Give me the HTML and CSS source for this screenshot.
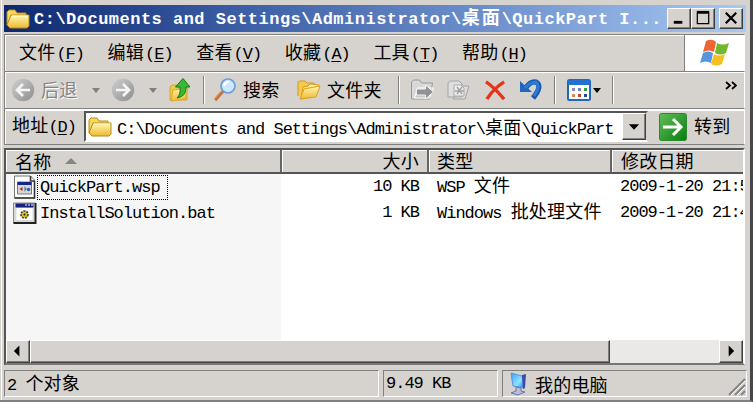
FILE: index.html
```html
<!DOCTYPE html>
<html lang="zh-CN"><head><meta charset="utf-8"><title>QuickPart</title><link rel="stylesheet" href="styles.css"></head>
<body>
<svg width="0" height="0" class="defs"><defs>
<linearGradient id="gold" x2="0" y2="1"><stop stop-color="#fff7ae"/><stop offset="1" stop-color="#efb936"/></linearGradient>
<linearGradient id="grey" x2="1" y2="1"><stop stop-color="#d0d0d0"/><stop offset="1" stop-color="#8d8d8d"/></linearGradient>
<linearGradient id="green" x2="1" y2="1"><stop stop-color="#62bd5a"/><stop offset="1" stop-color="#07800d"/></linearGradient>
<linearGradient id="screen" x2="1" y2="1"><stop stop-color="#3f9bff"/><stop offset=".6" stop-color="#8be4ff"/><stop offset="1" stop-color="#2c78dc"/></linearGradient>
<symbol id="folder" viewBox="0 0 24 20"><path d="M1 16V3l2-2h6l2 3h9v4" fill="#f6d662" stroke="#b98d19"/><path d="M5 6h18v11l-2 2H4l-3-3z" fill="url(#gold)" stroke="#ba8814"/><path d="M6 7h16" stroke="#fffbd0"/></symbol>
</defs></svg>
<div class="window">
<div class="title"><svg class="tfolder"><use href="#folder"/></svg><div class="tt">C:\Documents and Settings\Administrator\<span class="cj">桌面</span>\QuickPart I...</div>
<div class="buttons"><i class="btn"><svg viewBox="0 0 23 20"><path d="M6 14h9" stroke="#000" stroke-width="3"/></svg></i><i class="btn"><svg viewBox="0 0 23 20"><path d="M5 3.5h13" stroke="#000" stroke-width="3"/><path d="M5.5 4v11.5h12V4" fill="none" stroke="#000" stroke-width="1.3"/></svg></i><i class="btn close"><svg viewBox="0 0 23 20"><path d="m6 4 11 11M17 4 6 15" stroke="#000" stroke-width="2.3"/></svg></i></div></div>
<div class="menu"><div class="items"><span><b class="cj">文件</b>(<u>F</u>)</span><span><b class="cj">编辑</b>(<u>E</u>)</span><span><b class="cj">查看</b>(<u>V</u>)</span><span><b class="cj">收藏</b>(<u>A</u>)</span><span><b class="cj">工具</b>(<u>T</u>)</span><span><b class="cj">帮助</b>(<u>H</u>)</span></div>
<div class="flag"><svg width="32" height="30" viewBox="0 0 32 30"><path d="M7 3q6-3 10 1l-2 10q-5-3-11 0z" fill="#ee6534"/><path d="M18 5q5 3 12 0l-3 10q-6 3-11 0z" fill="#72b72d"/><path d="M4 15q5-3 10 0l-2 10q-5-3-11 0z" fill="#5596df"/><path d="M15 16q5 3 11 0l-3 10q-6 3-11 0z" fill="#f4bf1f"/></svg></div></div>
<div class="tools">
<svg class="g24 back" viewBox="0 0 24 24"><circle cx="12" cy="12" r="11.2" fill="url(#grey)"/><path d="M19 12H6m6-6-6 6 6 6" fill="none" stroke="#f5f5f5" stroke-width="2.7"/></svg>
<span class="cj off">后退</span><i class="down off1"></i>
<svg class="g24 fwd" viewBox="0 0 24 24"><circle cx="12" cy="12" r="11.2" fill="url(#grey)"/><path d="M5 12h13m-6-6 6 6-6 6" fill="none" stroke="#f5f5f5" stroke-width="2.7"/></svg><i class="down off2"></i>
<svg class="up" viewBox="0 0 22 24"><path d="M1 22V9l2-2h5l1 3h9v12z" fill="#edca4d" stroke="#d5a72c"/><path d="m4 12 15-2-3 11-14 2z" fill="url(#gold)" stroke="#dba928"/><path d="M8 20q4-4 3-11H6.500L14 .5 21 9h-4q1 9-9 11z" fill="#36b936" stroke="#14791b"/></svg>
<i class="sep s1"></i>
<svg class="search" viewBox="0 0 24 24"><path d="m2 22 8-9" stroke="#c97540" stroke-width="3.4"/><path d="m1 21 8-9" stroke="#efb178"/><circle cx="15" cy="8" r="7" fill="#cceaff" stroke="#6e9bdb" stroke-width="1.7"/><path d="M11 8q1-4 5-4" stroke="#fff" stroke-width="2" fill="none"/></svg>
<span class="cj">搜索</span>
<svg class="folders" viewBox="0 0 24 20"><path d="M1 16V2l2-1h5l2 2h7v12" fill="#f3ca50" stroke="#d39b21"/><path d="m4 19 2-12 5-1 2-2 9 1-3 11z" fill="url(#gold)" stroke="#d99a1c"/><path d="m3 19 4-10 16-3-4 11z" fill="url(#gold)" stroke="#dea023"/></svg>
<span class="cj l3">文件夹</span><i class="sep s2"></i>
<svg class="mv" viewBox="0 0 24 22"><path d="M1 20V3l2-2h6l2 3h11l-3 16z" fill="#d9d9d9" stroke="#999"/><path d="m4 19 3-10h16l-4 10z" fill="#c7c7c7" stroke="#fff"/><path d="M6 10h9V6l8 7-8 7v-4H6z" fill="#929292" stroke="#f2f2f2"/></svg>
<svg class="cp" viewBox="0 0 24 22"><path d="M1 16V4l2-2h9l3 3v13H1zM15 7h7l-4 13H6z" fill="#dedede" stroke="#a3a3a3"/><path d="M7 6h7l3 3v8H7z" fill="#eee" stroke="#aaa"/><path d="m10 8 5 7m0-7-5 7m-2-3h9" stroke="#a1a1a1" stroke-width="1.4"/></svg>
<svg class="del" viewBox="0 0 24 22"><path d="M2 2q8 5 19 18M21 2Q10 9 3 20" fill="none" stroke="#e5351a" stroke-width="3.5"/></svg>
<svg class="undo" viewBox="0 0 24 22"><path d="M6 10q5-8 11-7 7 4-3 16" fill="none" stroke="#1857ac" stroke-width="5.2"/><path d="M1 2v11h12z" fill="#2166bd"/><path d="M6 9q5-6 11-6 5 4-2 14" fill="none" stroke="#2d7bd5" stroke-width="3"/></svg>
<i class="sep s3"></i>
<svg class="view" viewBox="0 0 24 22"><rect x="1" y="1" width="22" height="20" rx="1.5" fill="#fff" stroke="#2367bd" stroke-width="2"/><path d="M1 3.5h22" stroke="#2470cc" stroke-width="5"/><path d="M5 10.5h3" stroke="#8586cb" stroke-width="3"/><path d="M11 10.5h3" stroke="#6b7eca" stroke-width="3"/><path d="M17 10.5h3" stroke="#31a345" stroke-width="3"/><path d="M11 16.5h3" stroke="#bd4828" stroke-width="3"/><path d="M17 16.5h3" stroke="#244795" stroke-width="3"/><path d="M5 16.5h3" stroke="#dc8a60" stroke-width="3"/></svg><i class="down black"></i><i class="sep s4"></i>
<svg class="more" viewBox="0 0 12 9"><path d="m1 1 4 3.5L1 8m6-7 4 3.5L7 8" fill="none" stroke="#000" stroke-width="1.8"/></svg>
</div>
<div class="address"><div class="alabel"><span class="cj">地址</span>(<u>D</u>)</div><div class="combo"><svg class="afolder"><use href="#folder"/></svg><div class="path">C:\Documents and Settings\Administrator\<span class="cj">桌面</span>\QuickPart</div><i class="btn drop"><svg viewBox="0 0 21 27"><path d="M5 11h11l-5.500 6z"/></svg></i></div>
<svg class="go" viewBox="0 0 28 28"><rect x=".5" y=".5" width="27" height="27" rx="2" fill="url(#green)" stroke="#2b8930"/><path d="M4 14h18M14 6l8 8-8 8" fill="none" stroke="#fff" stroke-width="3"/></svg><span class="cj">转到</span></div>
<div class="list"><div class="head"><div class="c1"><span class="cj">名称</span><i class="sort"></i></div><div class="c2 cj">大小</div><div class="c3 cj">类型</div><div class="c4 cj">修改日期</div></div>
<div class="body">
<div class="row"><div class="name"><svg viewBox="0 0 24 24"><path d="M2 1h16l4 4v18H2z" fill="#fff" stroke="#777"/><path d="M2 23h20V6M18 1v5h4" fill="none" stroke="#333" stroke-width="1.6"/><path d="M5 7h14v12H5z" fill="#d8d8d8" stroke="#777"/><path d="M5 8.500h14" stroke="#172489" stroke-width="3"/><path d="m10 12-3 2 3 2z" fill="#c21e18"/><path d="m12 11 2 3-2 3z" fill="#1b8a92"/><circle cx="16" cy="14.500" r="1.800" fill="#3360bb"/></svg><span class="focus">QuickPart.wsp</span></div><div class="size">10 KB</div><div class="type">WSP <span class="cj">文件</span></div><div class="date">2009-1-20 21:53</div></div>
<div class="row"><div class="name"><svg viewBox="0 0 24 24"><path d="M1 2h22v20H1z" fill="#d8d8d8" stroke="#8a8a8a"/><path d="M1 22h22V2" fill="none" stroke="#222" stroke-width="2"/><path d="M3 4.500h18" stroke="#17217f" stroke-width="4"/><path d="M13 4h1m2 0h1m2 0h1" stroke="#fff" stroke-width="2"/><path d="M4 7h16v12H4z" fill="#fff"/><circle cx="12" cy="13.500" r="3.500" fill="#d8c42c" stroke="#46421f" stroke-width="1.700" stroke-dasharray="2 1"/><circle cx="12" cy="13.500" r="1" fill="#222"/></svg><span>InstallSolution.bat</span></div><div class="size">1 KB</div><div class="type">Windows <span class="cj">批处理文件</span></div><div class="date">2009-1-20 21:48</div></div>
</div>
<div class="scroll"><i class="btn arrow"><svg viewBox="0 0 23 23"><path d="m13 5-6 6 6 6z"/></svg></i><i class="btn thumb"></i><i class="track"></i><i class="btn arrow"><svg viewBox="0 0 23 23"><path d="m9 5 6 6-6 6z"/></svg></i></div></div>
<div class="status"><div class="p1">2 <span class="cj">个对象</span></div><div class="p2">9.49 KB</div><div class="p3"><svg class="pc" viewBox="0 0 18 24"><path d="m2 1 11 3 2 12-11-2z" fill="url(#screen)" stroke="#5b93d8"/><path d="m13 3 4-1-1 14-2 1z" fill="#394bac"/><path d="m7 15 5 1v3l4 1-7 3-7-2 5-2z" fill="#b9bddb" stroke="#7173a9"/></svg><span class="cj">我的电脑</span><svg class="grip" viewBox="0 0 18 18"><path d="M1 17 17 1M7 17 17 7M13 17l4-4" stroke="#848484" stroke-width="2"/><path d="M3 17 17 3M9 17l8-8" stroke="#fff"/></svg></div></div>
</div></body></html>
```
FILE: styles.css
```css
*{box-sizing:border-box}
body{margin:0;width:753px;height:402px;overflow:hidden;background:#d6d3ce;font:17px/24px "Liberation Mono",monospace;letter-spacing:-1px;color:#000}
.defs{position:absolute}
svg{display:block;flex:none}
i{font-style:normal}
.cj{font:400 18px/24px "Noto Sans CJK SC",sans-serif;letter-spacing:.2px}
u{text-decoration-thickness:1px;text-underline-offset:2px}
.window{display:flex;flex-direction:column;width:753px;height:402px;padding:5px 7px 0 4px;border-right:3px solid #47474b;border-bottom:2px solid #808080;background:linear-gradient(to right,#d6d3ce 0 1px,#fff 1px 2px,#d6d3ce 2px)}
.title{display:flex;align-items:center;width:742px;height:27px;flex:none;background:linear-gradient(90deg,#0d286f,#3e60a7 33%,#6e91cd 66%,#a8c9f2);color:#fff;padding-left:2px}
.tfolder{width:24px;height:20px}
.tt{width:631px;margin-left:4px;margin-right:2px;white-space:pre;font-weight:700;letter-spacing:.49px;line-height:27px;height:27px}
.tt .cj{font-weight:700;letter-spacing:2px;line-height:22px}
.buttons{display:flex}
.btn{display:block;flex:none;background:#d6d3ce;border:1px solid;border-color:#fff #404040 #404040 #fff;box-shadow:inset -1px -1px #808080}
.buttons .btn{width:24px;height:21px}
.buttons .close{margin-left:4px}
.btn svg{width:100%;height:100%}
.menu{display:flex;flex:none;width:741px;height:38px;margin-top:2px;border:1px solid;border-color:#808080 #fff #808080 #808080;box-shadow:inset 1px 1px #fff,0 1px #fff}
.items{display:flex;flex:1;align-items:center;padding-left:14px}
.items>span{width:88.600px;white-space:nowrap}
.items .cj{margin-right:1px}
.flag{width:60px;background:#fff;border-left:1px solid #808080;display:flex;align-items:center;justify-content:center}
.tools{display:flex;align-items:center;flex:none;width:741px;height:37px;border:1px solid #808080;border-top:0;border-right-color:#fff;box-shadow:inset 1px 1px #fff,0 1px #fff}
.g24{width:24px;height:24px}
.back{margin-left:6px}
.tools>.cj{width:37px;margin-left:7px;margin-top:-2px;white-space:nowrap}
.tools>.l3{width:55px;margin-left:6px}
.tools>.off{color:#858585;text-shadow:1px 1px #fff;margin-left:6px}
.down{border:4.500px solid transparent;border-top:5px solid #808080;border-bottom:0;flex:none}
.off1{margin-left:14px}.fwd{margin-left:11px}.off2{margin-left:14px}
.up{width:22px;height:26px;margin-left:12px}
.sep{width:2px;height:28px;border-left:1px solid #808080;border-right:1px solid #fff;flex:none}
.s1{margin-left:12px}.search{width:24px;height:24px;margin-left:8px}
.tools .search+.cj{margin-left:6px}
.folders{width:24px;height:20px;margin-left:17px}
.s2{margin-left:16px}.mv{width:25px;height:22px;margin-left:10px}.cp{width:24px;height:22px;margin-left:12px}.del{width:25px;height:21px;margin-left:12px}.undo{width:24px;height:22px;margin-left:11px}.s3{margin-left:11px}.view{width:24px;height:22px;margin-left:11px}.black{border-top-color:#000;margin-left:2px}.s4{margin-left:11px}.more{width:12px;height:9px;margin-left:111px;margin-bottom:10px}
.address{display:flex;align-items:center;flex:none;width:741px;height:36px;border-left:1px solid #808080;border-right:1px solid #fff;box-shadow:inset 1px 2px #fff;border-bottom:1px solid #808080;padding-left:7px}
.alabel{width:72px;white-space:nowrap;margin-top:-2px}
.combo{width:564px;height:31px;border:2px solid;border-color:#555 #d6d3ce #fff #555;background:#fff;display:flex;align-items:center;padding-left:2px}
.afolder{width:24px;height:20px}
.path{width:510px;white-space:pre;padding-left:5px;padding-top:4px}
.path .cj{line-height:20px}
.drop{width:24px;height:27px}
.go{width:28px;height:28px;margin:0 7px 0 11px}
.address>.cj{margin-top:-3px}
.list{width:741px;height:217px;flex:none;margin-top:3px;border:2px solid;border-color:#555 #fff #777 #555;display:flex;flex-direction:column;background:linear-gradient(90deg,#f6f6f6 275px,#fff 275px);overflow:hidden}
.head{display:flex;height:24px;flex:none;border-bottom:2px solid #555;background:#d6d3ce;box-shadow:inset 0 1px #fff}
.head>div{flex:none;border-left:1px solid #fff;border-right:2px solid #666;line-height:21px;height:22px;white-space:nowrap}
.c1{width:276px;padding-left:8px;display:flex;align-items:center}
.sort{border:6px solid transparent;border-bottom-color:#858585;border-top:0;margin-left:14px}
.c2{width:147px;text-align:right;padding-right:8px}.c3{width:183px;padding-left:7px}.c4{width:140px;padding-left:8px}
.body{height:166px;flex:none}
.row{display:flex;height:26px;align-items:center;white-space:pre}
.name{display:flex;align-items:center;width:276px;flex:none;padding-left:6px}
.name svg{width:25px;height:24px}
.name span{height:25px;line-height:23px;padding:0 2px;border:1px solid transparent}
.name .focus{width:131px;border:1px dotted #000}
.size{width:137px;text-align:right;flex:none}.type{width:184px;padding-left:18px;flex:none}.date{padding-left:17px;flex:none}
.type .cj{line-height:20px}
.scroll{display:flex;height:23px;flex:none}
.arrow{width:24px}.thumb{width:580px}.track{flex:1;background:repeating-conic-gradient(#d6d3ce 0 25%,#fff 0 50%) 0/2px 2px}
.status{display:flex;width:743px;height:27px;flex:none;margin-top:5px;gap:4px}
.status>div{border:1px solid;border-color:#808080 #fff #fff #808080;line-height:25px;white-space:pre;padding-left:2px}
.status .cj{line-height:22px}
.p1{width:375px}.p2{width:115px}.status>.p3{flex:1;display:flex;align-items:center}
.pc{width:18px;height:24px;margin:0 8px 0 4px}.grip{width:18px;height:18px;margin-left:auto;align-self:flex-end}
```
